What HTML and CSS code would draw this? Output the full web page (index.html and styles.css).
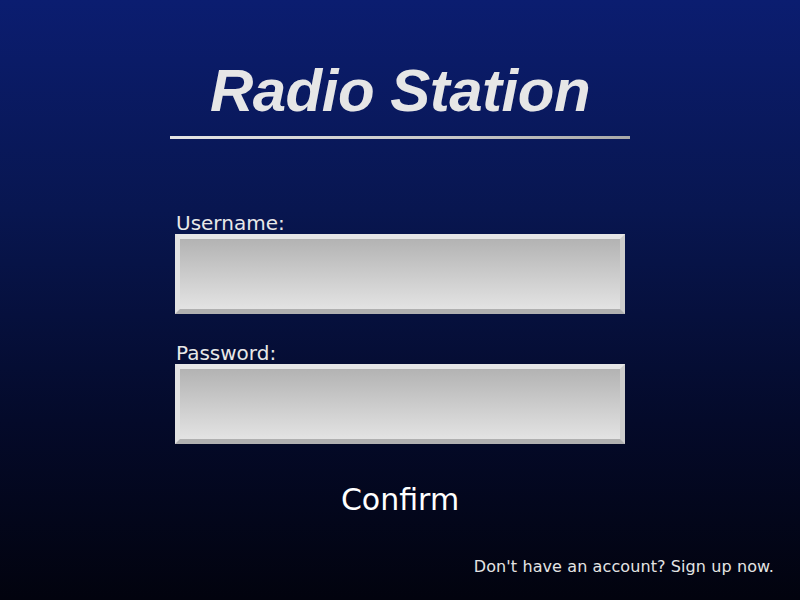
FILE: index.html
```html
<!DOCTYPE html>
<html>
<head>
<meta charset="utf-8">
<link rel="stylesheet" href="styles.css">
</head>
<body>
<div class="page">
  <header class="header">
    <h1 class="title">Radio Station</h1>
    <div class="rule"></div>
  </header>
  <form class="form">
    <label class="label">Username:</label>
    <div class="field"></div>
    <label class="label label-second">Password:</label>
    <div class="field"></div>
    <button type="button" class="confirm">Confirm</button>
  </form>
  <div class="signup">Don't have an account? Sign up now.</div>
</div>
</body>
</html>
```
FILE: styles.css
```css
html, body {
  margin: 0;
  padding: 0;
}
body {
  width: 800px;
  height: 600px;
  overflow: hidden;
  background: linear-gradient(to bottom, #0b1d70 0%, #081650 35%, #040a2a 70%, #02030e 100%);
  font-family: "DejaVu Sans", sans-serif;
  color: #e6e6e6;
}
.page {
  display: flex;
  flex-direction: column;
  align-items: center;
  height: 600px;
}
.header {
  padding-top: 61px;
  display: flex;
  flex-direction: column;
  align-items: center;
}
.title {
  margin: 0;
  font-family: "Liberation Sans", Arial, sans-serif;
  font-weight: bold;
  font-style: italic;
  font-size: 60px;
  line-height: 60px;
  letter-spacing: -0.5px;
  color: #e6e6e6;
}
.rule {
  margin-top: 15px;
  width: 460px;
  height: 3px;
  background: linear-gradient(to right, #e4e4e4, #c8c8c8 60%, #a8a8a8);
}
.form {
  margin-top: 73px;
  width: 450px;
  display: flex;
  flex-direction: column;
}
.label {
  display: block;
  font-size: 20px;
  line-height: 22px;
  padding-left: 1px;
  color: #e8e8e8;
}
.label-second {
  margin-top: 28px;
}
.field {
  box-sizing: border-box;
  height: 80px;
  border-style: solid;
  border-width: 5px;
  border-color: #e6e6e6 #cdcdcd #b0b0b0 #e2e2e2;
  background: linear-gradient(to bottom, #b3b3b3, #e3e3e3);
}
.confirm {
  margin-top: 38px;
  align-self: center;
  background: none;
  border: none;
  padding: 0;
  font-family: "DejaVu Sans", sans-serif;
  font-size: 30px;
  line-height: 36px;
  color: #ffffff;
}
.signup {
  margin-top: auto;
  align-self: flex-end;
  padding-right: 26px;
  padding-bottom: 24px;
  font-size: 16px;
  line-height: 19px;
  letter-spacing: 0.1px;
  color: #e4e4e4;
}
```
